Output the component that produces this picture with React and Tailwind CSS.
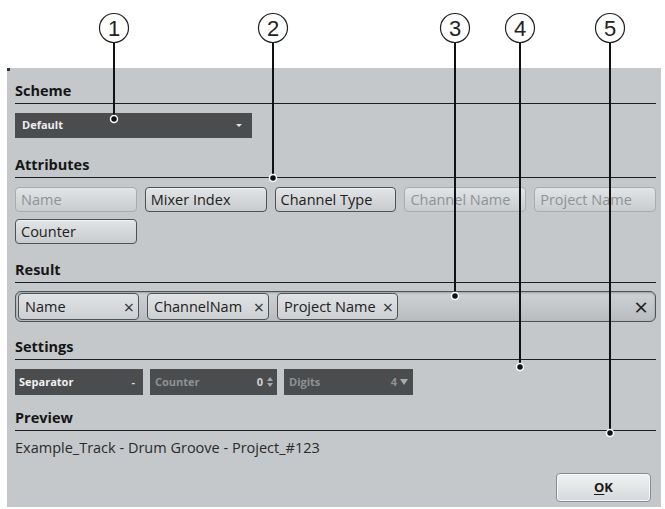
import React from 'react';

const font = { fontFamily: '"Open Sans", "Noto Sans", sans-serif' };

const Heading = ({ children, className = '' }) => (
    <div className={`border-b border-[#1e1e1e] pb-[3px] text-[14.5px] leading-[18px] font-bold text-[#151515] ${className}`}>
        {children}
    </div>
);

const Attr = ({ label, off }) => (
    <div
        className={`h-[25px] rounded-[4px] border px-[5px] flex items-center text-[14.5px] bg-gradient-to-b from-[#e2e4e6] to-[#c9ccce] ${off ? 'border-[#a8acaf] text-[#8e9295]' : 'border-[#4f5153] text-[#202020] shadow-[inset_0_1px_0_#f2f3f4]'}`}
    >
        {label}
    </div>
);

const Chip = ({ label, w }) => (
    <div className={`${w} h-[27px] rounded-[4px] border border-[#4f5153] bg-gradient-to-b from-[#e0e2e4] to-[#cdd0d2] flex items-center justify-between pl-[6px] pr-[4px] text-[14.5px] text-[#202020]`}>
        <span>{label}</span>
        <span className="text-[18px] leading-none text-[#333]">×</span>
    </div>
);

const Callouts = () => {
    const marks = [
        { n: '1', x: 114, y: 119 },
        { n: '2', x: 273, y: 178 },
        { n: '3', x: 455, y: 296 },
        { n: '4', x: 520, y: 367 },
        { n: '5', x: 610, y: 433 },
    ];
    return (
        <svg className="absolute top-0 left-0 pointer-events-none" width="665" height="509" viewBox="0 0 665 509">
            {marks.map(m => (
                <g key={m.n}>
                    <line x1={m.x} y1="42" x2={m.x} y2={m.y} stroke="#111" strokeWidth="2" />
                    <circle cx={m.x} cy="28" r="14.5" fill="#fff" stroke="#222" strokeWidth="1.2" />
                    <text x={m.x} y="36" textAnchor="middle" fontSize="22" fill="#222" fontFamily='"Liberation Sans", sans-serif'>{m.n}</text>
                    <circle cx={m.x} cy={m.y} r="3.5" fill="#111" stroke="#fff" strokeWidth="1.5" />
                </g>
            ))}
        </svg>
    );
};

const App = () => {
    return (
        <div className="relative w-[665px] h-[509px] bg-white overflow-hidden" style={font}>
            <div className="absolute left-[7px] top-[68px] w-[3px] h-[3px] bg-[#333]"></div>
            <div className="mt-[68px] ml-[7px] w-[654px] h-[439px] bg-[#c4c8cb] pl-[8px] pr-[5px] pt-[14px] flex flex-col">
                <Heading>Scheme</Heading>

                <div className="mt-[9px] w-[237px] h-[25px] bg-[#4b4c4e] flex items-center justify-between pl-[7px] pr-[10px]">
                    <span className="text-[11px] font-bold text-[#eeeeee]">Default</span>
                    <span className="w-0 h-0 border-l-[3px] border-r-[3px] border-t-[3px] border-l-transparent border-r-transparent border-t-[#e6e6e6]"></span>
                </div>

                <Heading className="mt-[18px]">Attributes</Heading>

                <div className="mt-[9px] grid grid-cols-5 gap-x-[8px] gap-y-[7px]">
                    <Attr label="Name" off />
                    <Attr label="Mixer Index" />
                    <Attr label="Channel Type" />
                    <Attr label="Channel Name" off />
                    <Attr label="Project Name" off />
                    <Attr label="Counter" />
                </div>

                <Heading className="mt-[17px]">Result</Heading>

                <div className="mt-[8px] h-[31px] rounded-[6px] border border-[#505254] bg-gradient-to-b from-[#cfd2d5] to-[#b8bcbf] shadow-[inset_0_1px_2px_rgba(0,0,0,0.25)] flex items-center gap-[8px] pl-[2px] pr-[7px]">
                    <Chip label="Name" w="w-[121px]" />
                    <Chip label="ChannelNam" w="w-[122px]" />
                    <Chip label="Project Name" w="w-[121px]" />
                    <span className="ml-auto text-[24px] leading-none text-[#222]">×</span>
                </div>

                <Heading className="mt-[16px]">Settings</Heading>

                <div className="mt-[9px] flex gap-[7px]">
                    <div className="w-[128px] h-[26px] bg-[#4b4c4e] flex items-center justify-between pl-[4px] pr-[8px] text-[11px] font-bold">
                        <span className="text-[#f2f2f2]">Separator</span>
                        <span className="text-[#d8d8d8]">-</span>
                    </div>
                    <div className="w-[127px] h-[26px] bg-[#4b4c4e] flex items-center justify-between pl-[5px] pr-[4px] text-[11px] font-bold">
                        <span className="text-[#8f9294]">Counter</span>
                        <span className="flex items-center gap-[4px]">
                            <span className="text-[#d0d0d0]">0</span>
                            <span className="flex flex-col gap-[2px]">
                                <span className="w-0 h-0 border-l-[3px] border-r-[3px] border-b-[4px] border-l-transparent border-r-transparent border-b-[#a8a8a8]"></span>
                                <span className="w-0 h-0 border-l-[3px] border-r-[3px] border-t-[4px] border-l-transparent border-r-transparent border-t-[#a8a8a8]"></span>
                            </span>
                        </span>
                    </div>
                    <div className="w-[129px] h-[26px] bg-[#4b4c4e] flex items-center justify-between pl-[5px] pr-[5px] text-[11px] font-bold">
                        <span className="text-[#8f9294]">Digits</span>
                        <span className="flex items-center gap-[3px]">
                            <span className="text-[#8f9294]">4</span>
                            <span className="w-0 h-0 border-l-[4px] border-r-[4px] border-t-[6px] border-l-transparent border-r-transparent border-t-[#a8abad]"></span>
                        </span>
                    </div>
                </div>

                <Heading className="mt-[14px]">Preview</Heading>

                <div className="mt-[8px] text-[14.5px] leading-[18px] text-[#2a2a2a]">
                    Example_Track - Drum Groove - Project_#123
                </div>

                <div className="mt-[16px] flex justify-end pr-[5px]">
                    <div className="w-[95px] h-[29px] rounded-[4px] border border-[#8a8d90] bg-gradient-to-b from-[#f0f1f2] to-[#d6d9db] shadow-[inset_0_0_0_1px_#f7f7f7] flex items-center justify-center text-[13px] font-bold text-[#1a1a1a]">
                        <span><span className="underline underline-offset-2">O</span>K</span>
                    </div>
                </div>
            </div>
            <Callouts />
        </div>
    );
};

export default App;
